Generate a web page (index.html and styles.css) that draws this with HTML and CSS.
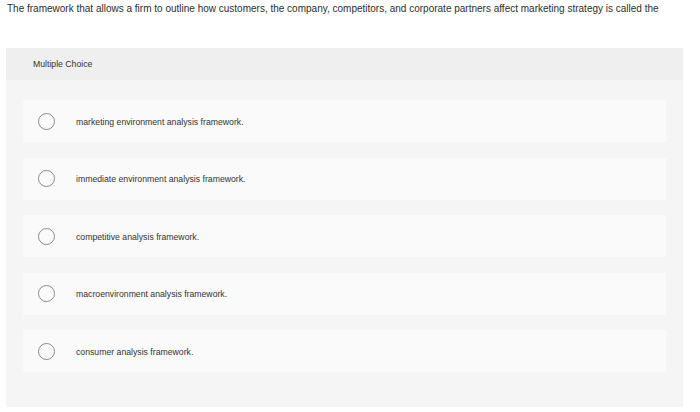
FILE: index.html
```html
<!DOCTYPE html>
<html>
<head>
<meta charset="utf-8">
<link rel="stylesheet" href="styles.css">
</head>
<body>
<p class="question">The framework that allows a firm to outline how customers, the company, competitors, and corporate partners affect marketing strategy is called the</p>
<div class="panel">
  <div class="panel-head">Multiple Choice</div>
  <div class="options">
    <div class="option"><span class="radio"></span><span class="label">marketing environment analysis framework.</span></div>
    <div class="option"><span class="radio"></span><span class="label">immediate environment analysis framework.</span></div>
    <div class="option"><span class="radio"></span><span class="label">competitive analysis framework.</span></div>
    <div class="option"><span class="radio"></span><span class="label">macroenvironment analysis framework.</span></div>
    <div class="option"><span class="radio"></span><span class="label">consumer analysis framework.</span></div>
  </div>
</div>
</body>
</html>
```
FILE: styles.css
```css
html, body {
  margin: 0;
  padding: 0;
  background: #ffffff;
  font-family: "Liberation Sans", Arial, sans-serif;
  color: #333333;
}
.question {
  margin: 0;
  padding: 2px 0 0 7px;
  font-size: 10px;
  line-height: 14px;
  white-space: nowrap;
  color: #2e2e2e;
}
.panel {
  margin: 32px 17px 0 6px;
  background: #f5f5f5;
  height: 359px;
}
.panel-head {
  background: #efefef;
  height: 32px;
  box-sizing: border-box;
  padding: 11px 0 0 27px;
  font-size: 8.7px;
  line-height: 10px;
  color: #333;
}
.options {
  padding: 20px 17px 0 17px;
  display: flex;
  flex-direction: column;
  gap: 15.5px;
}
.option {
  background: #fafafa;
  height: 42px;
  display: flex;
  align-items: center;
  padding-left: 15px;
}
.radio {
  width: 17px;
  height: 17px;
  border: 1px solid #8a8a8a;
  border-radius: 50%;
  box-sizing: border-box;
  flex: none;
}
.label {
  margin-left: 21px;
  padding-top: 1px;
  font-size: 8.7px;
  color: #333;
}
```
